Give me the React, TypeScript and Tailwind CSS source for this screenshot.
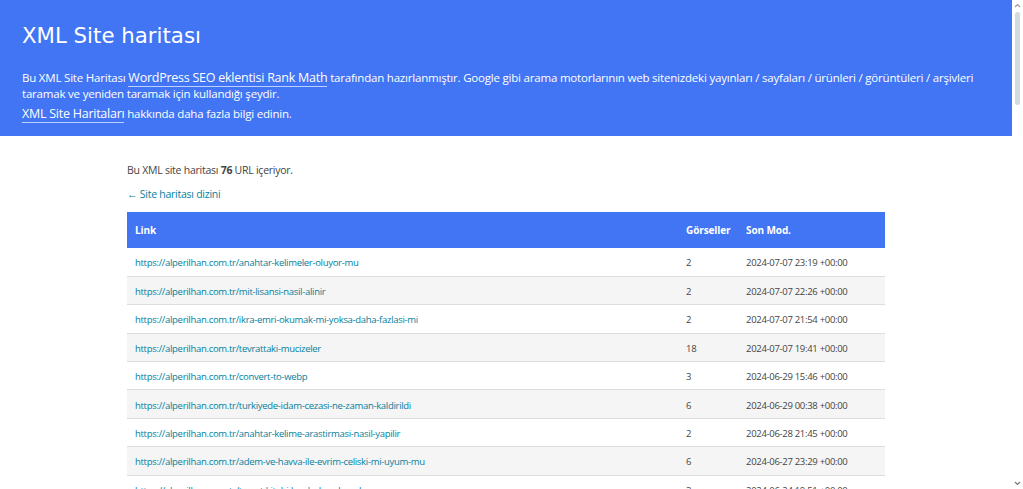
const rows = [
  ["https://alperilhan.com.tr/anahtar-kelimeler-oluyor-mu", "2", "2024-07-07 23:19 +00:00"],
  ["https://alperilhan.com.tr/mit-lisansi-nasil-alinir", "2", "2024-07-07 22:26 +00:00"],
  ["https://alperilhan.com.tr/ikra-emri-okumak-mi-yoksa-daha-fazlasi-mi", "2", "2024-07-07 21:54 +00:00"],
  ["https://alperilhan.com.tr/tevrattaki-mucizeler", "18", "2024-07-07 19:41 +00:00"],
  ["https://alperilhan.com.tr/convert-to-webp", "3", "2024-06-29 15:46 +00:00"],
  ["https://alperilhan.com.tr/turkiyede-idam-cezasi-ne-zaman-kaldirildi", "6", "2024-06-29 00:38 +00:00"],
  ["https://alperilhan.com.tr/anahtar-kelime-arastirmasi-nasil-yapilir", "2", "2024-06-28 21:45 +00:00"],
  ["https://alperilhan.com.tr/adem-ve-havva-ile-evrim-celiski-mi-uyum-mu", "6", "2024-06-27 23:29 +00:00"],
  ["https://alperilhan.com.tr/tevrat-kitabi-kac-bolumden-olusur", "3", "2024-06-24 19:51 +00:00"],
  ["https://alperilhan.com.tr/incil-kac-tane", "4", "2024-06-23 18:12 +00:00"],
];

function Scrollbar() {
  return (
    <aside className="w-[11px] shrink-0 bg-white flex flex-col items-center">
      <svg width="7" height="5" viewBox="0 0 7 5" className="mt-[3px]">
        <path d="M1 4 L3.5 1.5 L6 4" fill="none" stroke="#9a9a9a" strokeWidth="1.2" />
      </svg>
      <div className="mt-[4px] w-[5px] h-[93px] rounded-full bg-[#d3d9de]" />
      <div className="flex-1" />
      <svg width="7" height="5" viewBox="0 0 7 5" className="mb-[3px]">
        <path d="M1 1 L3.5 3.5 L6 1" fill="none" stroke="#777" strokeWidth="1.2" />
      </svg>
    </aside>
  );
}

export default function App() {
  return (
    <div className="h-[489px] flex overflow-hidden bg-white text-[#444]" style={{ fontFamily: '"Open Sans", sans-serif' }}>
      <div className="flex-1 min-w-0 overflow-hidden">
        <header className="bg-[#4275f4] text-white px-[22px] pt-[22px] pb-[14px]">
          <h1 className="text-[21.3px] leading-[28px] font-normal" style={{ fontFamily: '"DejaVu Sans", Verdana, sans-serif' }}>
            XML Site haritası
          </h1>
          <p className="mt-[20px] text-[11.5px] leading-[16px] tracking-[-0.2px]">
            Bu XML Site Haritası{" "}
            <a className="text-[12.5px] tracking-[-0.25px] border-b border-[#bcd0fb]">WordPress SEO eklentisi Rank Math</a>{" "}
            tarafından hazırlanmıştır. Google gibi arama motorlarının web sitenizdeki yayınları / sayfaları / ürünleri / görüntüleri / arşivleri taramak ve yeniden taramak için kullandığı şeydir.
          </p>
          <p className="mt-[4px] text-[11.5px] leading-[16px] tracking-[-0.2px]">
            <a className="text-[12.5px] tracking-[-0.25px] border-b border-[#bcd0fb]">XML Site Haritaları</a> hakkında daha fazla bilgi edinin.
          </p>
        </header>
        <main className="mx-auto w-[758px] pt-[26px]">
          <p className="text-[10.5px] leading-[16px] tracking-[-0.25px]">
            Bu XML site haritası <strong className="font-bold">76</strong> URL içeriyor.
          </p>
          <p className="mt-[8px] text-[10.5px] leading-[16px] tracking-[-0.25px] text-[#05809e]">← Site haritası dizini</p>
          <table className="mt-[10px] w-full table-fixed border-collapse text-[9.5px] tracking-[-0.3px]">
            <colgroup>
              <col />
              <col className="w-[60px]" />
              <col className="w-[147px]" />
            </colgroup>
            <thead>
              <tr className="bg-[#4275f4] text-white h-[36px] text-[10px] tracking-[-0.1px]">
                <th className="text-left font-bold px-[8px] pt-[1px]">Link</th>
                <th className="text-left font-bold px-[8px] pt-[1px] whitespace-nowrap">Görseller</th>
                <th className="text-left font-bold px-[8px] pt-[1px]">Son Mod.</th>
              </tr>
            </thead>
            <tbody>
              {rows.map((r, i) => (
                <tr key={i} className={`h-[28.4px] border-b border-[#dddddd] ${i % 2 === 1 ? "bg-[#f5f5f5]" : "bg-white"}`}>
                  <td className="px-[8px] pt-[3px] text-[#05809e] whitespace-nowrap">{r[0]}</td>
                  <td className="px-[8px] pt-[3px]">{r[1]}</td>
                  <td className="px-[8px] pt-[3px] whitespace-nowrap">{r[2]}</td>
                </tr>
              ))}
            </tbody>
          </table>
        </main>
      </div>
      <Scrollbar />
    </div>
  );
}
